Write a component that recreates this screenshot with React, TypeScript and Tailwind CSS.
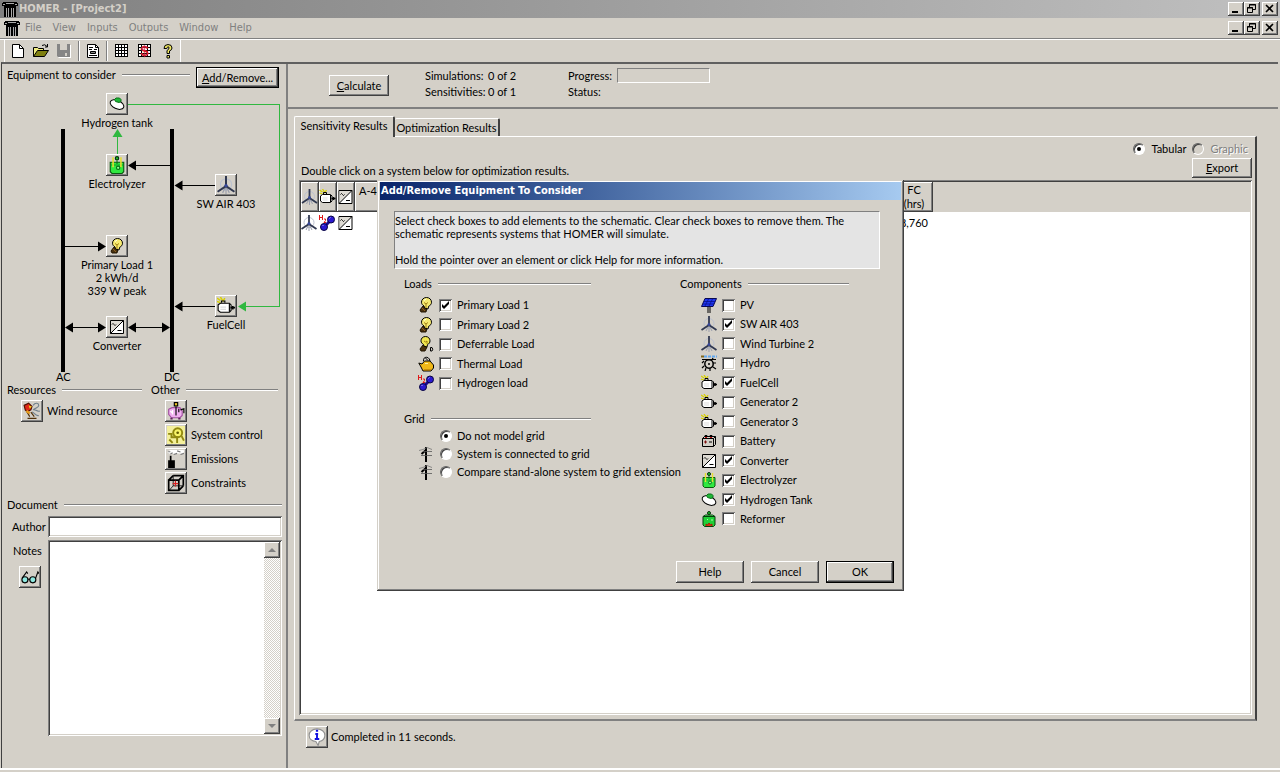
import React from 'react';

type IconProps = { className?: string };

const RAISED = 'bg-[#d4d0c8] shadow-[inset_-1px_-1px_0_#404040,inset_1px_1px_0_#fff,inset_-2px_-2px_0_#808080]';
const SUNKEN = 'shadow-[inset_1px_1px_0_#808080,inset_-1px_-1px_0_#fff,inset_2px_2px_0_#404040,inset_-2px_-2px_0_#d4d0c8]';
const DEFAULT_BTN = 'bg-[#d4d0c8] border border-black shadow-[inset_-1px_-1px_0_#404040,inset_1px_1px_0_#fff,inset_-2px_-2px_0_#808080]';

const Svg: React.FC<{ className?: string; children: React.ReactNode }> = ({ className = 'w-4 h-4', children }) => (
  <svg viewBox="0 0 16 16" className={`${className} block shrink-0`} fill="none" stroke="#000" aria-hidden="true">
    {children}
  </svg>
);

/* ---------- icons ---------- */

const ColumnIcon = ({ className }: IconProps) => (
  <Svg className={className}>
    <g stroke="none" shapeRendering="crispEdges">
      <path fill="#000" d="M1 1h14v1h1v3h-2v11H2V5H0V2h1z" />
      <path fill="#aaa" d="M4 2h8v1H4zM1 3h2v1H1zM13 3h2v1h-2zM4 7h1v9H4zM6 7h1v9H6zM9 7h1v9H9zM11 7h1v9h-1z" />
    </g>
  </Svg>
);

const BulbIcon = ({ className }: IconProps) => (
  <Svg className={className}>
    <path d="M5 9l4 2-1 4H3l-1-2z" fill="#4a3210" stroke="#201400" />
    <path d="M8.500.5c3 0 5 2.200 5 4.700 0 2-1.200 3.300-2.800 4L10 12 6.500 11 6 9C4.500 8 3.500 7 3.500 5.200c0-2.500 2-4.700 5-4.700z" fill="#f6ea70" />
    <path d="M6 5.500l2 1.500 2-1.500M8 7v4" stroke="#a08010" />
    <path d="M6 3.500L8 2" stroke="#fffff0" />
    <path d="M4 11l3 3" stroke="#906020" />
  </Svg>
);

const DeferrableIcon = () => (
  <Svg>
    <path d="M5 9l4 2-2 4H3l-1-2z" fill="#4a3210" stroke="#201400" />
    <path d="M7.500.5c2.800 0 4.500 2 4.500 4.300 0 2-1 3-2.500 3.800L9 11l-3-.8-.5-1.700C4 7.500 3 6.500 3 4.800 3 2.500 4.700.5 7.500.5z" fill="#f0e650" />
    <path d="M6 5l1.500 1L9 5v3" stroke="#a08010" />
    <path d="M12.500 11.500v3.500h1.500q1.500-1.700 0-3.500z" />
  </Svg>
);

const KettleIcon = () => (
  <Svg>
    <path d="M5.500 5c-.5-5 6-5 6.500 0M7 1.500l3 3" />
    <path d="M.8 7l3.200 1 2.500-3H12l3.500 4v3L13 15H5L3 11z" fill="#f0b818" />
    <path d="M7 7.500h3" stroke="#fff0a0" />
    <path d="M6 14h7" stroke="#a06800" />
  </Svg>
);

const HydrogenIcon = () => (
  <Svg>
    <g stroke="#e01818">
      <path d="M.5 0v5M3.500 0v5M.5 2.500h3M5 4h1.500v1.500L5 7.500h2" />
    </g>
    <path d="M6 11l5-5" stroke="#1a0a90" strokeWidth="3" />
    <circle cx="12" cy="4.500" r="3.500" fill="#2a18d0" stroke="#080440" />
    <circle cx="5" cy="12" r="3.500" fill="#2a18d0" stroke="#080440" />
    <path d="M10.500 3.500l1-1M3.500 11l1-1" stroke="#b0b0ff" />
  </Svg>
);

const TowerIcon = () => (
  <Svg>
    <path d="M8 1v15" strokeWidth="2" />
    <path d="M8 4L3.500 8" strokeWidth="2" />
    <path d="M3 9.500h11M5 5.500h9" stroke="#555" strokeWidth=".8" />
    <path d="M1 4.500l4-1 4-2 5 2" stroke="#777" strokeWidth=".8" />
  </Svg>
);

const PVIcon = () => (
  <Svg>
    <path d="M7 9v7M9 9v7" />
    <path d="M4 1.500h11.500L12 9.500H.5z" fill="#2038f0" stroke="#080850" />
    <path d="M7.500 2L4 9M11.500 2L8 9M3 4.500h11M2 7h11" stroke="#081090" strokeWidth=".8" />
  </Svg>
);

const TurbineIcon = ({ className }: IconProps) => (
  <Svg className={className}>
    <circle cx="8" cy="7.500" r="5" stroke="#bcc2d0" />
    <path d="M8 9l-3 6M8 9l3 6M8 9v7" stroke="#9a9eac" />
    <path d="M8 0v9" stroke="#303850" strokeWidth="1.800" />
    <path d="M8 9l-7.500 5M8 9l7.500 5" stroke="#303850" strokeWidth="1.800" />
    <circle cx="8" cy="8.500" r="1.500" fill="#384898" stroke="none" />
  </Svg>
);

const HydroIcon = () => (
  <Svg>
    <path d="M0 1.500h3" stroke="#806820" strokeWidth="2" />
    <path d="M3 1.500h13" stroke="#60a8f0" strokeWidth="2" strokeDasharray="3 1" />
    <circle cx="8" cy="9" r="4.200" fill="#d4d0c8" strokeWidth="1.500" />
    <circle cx="8" cy="9" r="1" fill="#000" stroke="none" />
    <path d="M1 4.500h14M3 6L1 8M3 11l-2 2M5 13l-1 3M9 13v3M12 12l3 2M12 8h3M11 5l1-2" strokeWidth="1.200" />
  </Svg>
);

const GeneratorIcon = ({ className }: IconProps) => (
  <Svg className={className}>
    <path d="M0 1l3 2M3 0l2 3M0 4l3 1M7 1L5 4" stroke="#d8d000" strokeWidth="1.300" />
    <path d="M3 5.500h8l1.500 1.500v5L11 13.500H3L1 12V7z" fill="#fff" />
    <path d="M11 6v7M4 5V3.500h3V5" />
    <path d="M3 9h5M3 11h5" stroke="#ddd" />
    <path d="M12 9.500h4M14 8v3" strokeWidth="1.600" />
  </Svg>
);

const BatteryIcon = () => (
  <Svg>
    <path d="M1.500 5.500l2-2h11v8l-2 2h-11z" fill="#d4d0c8" />
    <path d="M1.500 5.500h11v8M12.500 5.500l2-2M4 4V2.500h2V4M9 4V2.500h2V4" />
    <path d="M3 9h3M4.500 7.500v3" stroke="#801010" />
    <path d="M8 9h3" />
    <path d="M4 4.500h2M9 4.500h2" stroke="#c01010" />
  </Svg>
);

const ConverterIcon = ({ className }: IconProps) => (
  <Svg className={className}>
    <path d="M1.500 1.500h13v13h-13z" fill="#fff" />
    <path d="M2 2h12L2 14z" fill="#dedbd4" stroke="none" />
    <path d="M1.500 14.500l13-13" />
    <path d="M3 5.500q1-2 2 0t2 0M8.500 11.500h4" />
  </Svg>
);

const ElectrolyzerIcon = ({ className }: IconProps) => (
  <Svg className={className}>
    <path d="M2 5.500h12v8.500l-1.500 1.500h-9L2 14z" fill="#30e840" stroke="#0a5a10" />
    <path d="M2.500 8h11" stroke="#10a828" />
    <path d="M4.500 1v9M11.500 1v9" stroke="#e8e030" strokeWidth="1.400" />
    <circle cx="8" cy="2" r="1.500" fill="#20c030" stroke="#043008" />
    <path d="M8 4v3" stroke="#0a7018" />
    <circle cx="9" cy="10.500" r="1.500" fill="#90ff90" stroke="#0a7018" />
  </Svg>
);

const TankIcon = ({ className }: IconProps) => (
  <Svg className={className}>
    <ellipse cx="8" cy="8.500" rx="7.300" ry="4.200" transform="rotate(25 8 8.500)" fill="#fff" />
    <path d="M5.500 3.500L7 2h3.500L12 3.500v2L10 6.500 6.500 5.500z" fill="#20b838" stroke="#0a7018" />
  </Svg>
);

const ReformerIcon = () => (
  <Svg>
    <path d="M2 5.500h12v8.500l-1.500 1.500h-9L2 14z" fill="#20d038" stroke="#063c0c" />
    <path d="M2 5.500l2.500-1.500h7L14 5.500z" fill="#50f060" stroke="#063c0c" />
    <circle cx="8" cy="2" r="1.500" fill="#20c030" stroke="#043008" />
    <path d="M6 8l1 1M10 9h2" stroke="#a0ffa0" />
    <path d="M5 15v-2l1.500 1L8 12l1.500 2 1.500-1v2" fill="#e03010" stroke="#a02008" />
  </Svg>
);

const WindIcon = ({ className }: IconProps) => (
  <Svg className={className}>
    <path d="M1 3l4-2 3 3-1 3-2 1v2L2 7z" fill="#e02818" stroke="#501000" />
    <path d="M5 3l3 1-2 2z" fill="#f0d020" stroke="none" />
    <path d="M9 3c2-3 5-2 5 0s-3 2-5 4M9 7c2-1 3 2 6 1M8 9c2 0 3 4 6 3" stroke="#70808c" />
    <path d="M3 8l3 5M7 9l3 4M4 14.500h8" stroke="#503008" />
    <path d="M3 8l3 2" stroke="#e8a020" strokeWidth="2" />
  </Svg>
);

const PiggyIcon = ({ className }: IconProps) => (
  <Svg className={className}>
    <path d="M1.500 6.500l3-1.500h7l2 3v4l-2 2H4L1.500 11z" fill="#f0b0f0" stroke="#a050a0" />
    <rect x="6.500" y=".5" width="3" height="3" fill="#e8c020" />
    <path d="M8 4v8M10.500 6v3M12 7l3-1v4" />
    <path d="M3 8l2 2M5 7v4" stroke="#fff" />
    <path d="M4 14v1.500M11 14v1.500" stroke="#602060" strokeWidth="2" />
  </Svg>
);

const ControlIcon = ({ className }: IconProps) => (
  <Svg className={className}>
    <path d="M0 0h16v16H0z" fill="#f4f09c" stroke="none" />
    <circle cx="9.500" cy="6" r="4" fill="#f8f468" stroke="#908810" strokeWidth="1.700" />
    <circle cx="9.500" cy="6" r="1.200" fill="#605800" stroke="none" />
    <path d="M1 7h3v3h5v5M2 12l3 3M13 9l2 4" stroke="#908810" strokeWidth="1.700" />
  </Svg>
);

const EmissionsIcon = ({ className }: IconProps) => (
  <Svg className={className}>
    <path d="M1 16V9h1.500V5H4v4h3v7z" fill="#000" stroke="none" />
    <path d="M2 3c1-2 4-2 5-1 2-1 4-1 8 0" stroke="#fff" strokeWidth="3.500" />
    <path d="M1 1.500h2M6 4l3-1M9 .8l3 1M3 3.500l2-1M12 4l3-1" stroke="#777" />
  </Svg>
);

const CubeIcon = ({ className }: IconProps) => (
  <Svg className={className}>
    <path d="M1.500 5.500h9v9h-9zM5.500 1.500h9v9M1.500 5.500l4-4M10.500 5.500l4-4M10.500 14.500l4-4" strokeWidth="1.500" />
    <path d="M5.500 2v8.500H14M2 14.500l3.500-4" strokeWidth=".7" />
    <path d="M5 8.500h5M7.500 6v5" stroke="#d82020" />
  </Svg>
);

const GlassesIcon = ({ className }: IconProps) => (
  <Svg className={className}>
    <circle cx="3.500" cy="10.500" r="2.700" fill="#8ee8e0" />
    <circle cx="10.500" cy="10.500" r="2.700" fill="#8ee8e0" />
    <path d="M6 10h2M1 9l4-5.500 1 1.500M13 9l2-5.500 1 1.500" />
  </Svg>
);

const InfoIcon = ({ className }: IconProps) => (
  <Svg className={className}>
    <path d="M8 .8c4 0 7 2.400 7 5.700 0 3-2 5-5 5.500L9 15.500 7 12C3.500 11.700 1 9.500 1 6.500 1 3.200 4 .8 8 .8z" fill="#fff" stroke="#909090" />
    <path d="M7 2.500h2M6.500 5.300H9M8 5v5M6 9.800h4" stroke="#1010e0" strokeWidth="1.700" />
  </Svg>
);

const NewIcon = () => (
  <Svg>
    <path d="M2.500 1.500h7l4 4v9h-11z" fill="#fff" />
    <path d="M9.500 1.500v4h4" />
  </Svg>
);

const OpenIcon = () => (
  <Svg>
    <path d="M.5 13.500v-9h4l1 1h5v2" fill="#f0ec80" />
    <path d="M.5 13.500l4-6h11l-4 6z" fill="#808010" />
    <path d="M9 2.500q3-2 5 1M14.500 1v3H12" />
  </Svg>
);

const SaveIcon = () => (
  <Svg>
    <path d="M2 2h13v13H3l-1-1z" fill="#fff" stroke="none" />
    <path d="M1 1h13v13H2l-1-1z" fill="#858585" stroke="none" />
    <path d="M4 1h7v6H4zM9 10h2v3H9z" fill="#d4d0c8" stroke="none" />
  </Svg>
);

const ReportIcon = () => (
  <Svg>
    <path d="M2.500 1.500h8l3 3v10h-11z" fill="#fff" />
    <path d="M10.500 1.500v3h3M4 4.500h4M4 6.500h3M9 6.500h3M4 12.500h8" />
    <path d="M5.500 8.500h5v2h-5z" fill="#888" />
  </Svg>
);

const GridIcon = () => (
  <Svg>
    <g shapeRendering="crispEdges">
      <path d="M1.500 1.500h12v12h-12z" fill="#fff" />
      <path d="M4.500 1v13M7.500 1v13M10.500 1v13M1 4.500h13M1 7.500h13M1 10.500h13" />
    </g>
  </Svg>
);

const CostIcon = () => (
  <Svg>
    <g shapeRendering="crispEdges">
      <path d="M1.500 1.500h12v12h-12z" fill="#fff" />
      <path d="M4.500 1v13M10.500 1v13M1 4.500h13M1 7.500h13M1 10.500h13" />
    </g>
    <text x="7.500" y="13" textAnchor="middle" fill="#d01830" stroke="none" fontSize="15" fontWeight="bold" fontFamily="Liberation Sans">$</text>
  </Svg>
);

const HelpIcon = () => (
  <Svg>
    <path d="M4 5.500q0-4 4-4t4 3.500q0 2-2.500 3v2.500H7V7.500Q9 6.500 9 5T8 3.800 6.800 5.500z" fill="#f0e860" />
    <path d="M7 12.500h2.500V15H7z" fill="#f0e860" />
  </Svg>
);

/* ---------- small controls ---------- */

const IconButton: React.FC<{ label: string; children: React.ReactNode }> = ({ label, children }) => (
  <button type="button" aria-label={label} className={`w-[22px] h-[22px] shrink-0 grid place-items-center ${RAISED}`}>
    {children}
  </button>
);

const Rule = () => <span className="flex-1 h-[2px] border-t border-[#808080] border-b border-b-white" />;

const SectionHead: React.FC<{ title: string; className?: string }> = ({ title, className = '' }) => (
  <h3 className={`flex items-center gap-[6px] h-4 leading-3 ${className}`}>
    {title}
    <Rule />
  </h3>
);

const CheckRow: React.FC<{ label: string; icon: React.ReactNode; checked?: boolean }> = ({ label, icon, checked }) => (
  <label className="flex items-center h-[18px]">
    {icon}
    <span className="relative ml-[5px] mr-[5px] w-[13px] h-[13px] shrink-0">
      <input type="checkbox" defaultChecked={checked} className={`peer appearance-none block w-[13px] h-[13px] bg-white ${SUNKEN}`} />
      <svg viewBox="0 0 13 13" className="absolute inset-0 hidden peer-checked:block pointer-events-none" aria-hidden="true">
        <path d="M3 5v3l2 2 5-5V2L5 7z" fill="#000" />
      </svg>
    </span>
    {label}
  </label>
);

const Radio: React.FC<{ name: string; checked?: boolean; disabled?: boolean }> = ({ name, checked, disabled }) => (
  <span className="relative w-3 h-3 shrink-0">
    <input
      type="radio"
      name={name}
      defaultChecked={checked}
      disabled={disabled}
      className="peer appearance-none block w-3 h-3 rounded-full border border-t-[#606060] border-l-[#606060] border-b-white border-r-white bg-white shadow-[inset_1px_1px_0_#404040] disabled:bg-[#d4d0c8]"
    />
    <span className="absolute left-1 top-1 w-1 h-1 rounded-full bg-black hidden peer-checked:block pointer-events-none" />
  </span>
);

const WindowButtons = () => (
  <div className="flex items-center pr-[2px]">
    <button type="button" aria-label="Minimize" className={`w-4 h-[14px] ${RAISED}`}>
      <svg viewBox="0 0 16 14" className="block w-4 h-[14px]"><path d="M4 9h6v2H4z" /></svg>
    </button>
    <button type="button" aria-label="Restore" className={`w-4 h-[14px] ${RAISED}`}>
      <svg viewBox="0 0 16 14" className="block w-4 h-[14px]" fill="none" stroke="#000">
        <path d="M5.500 5V2.500h6v5H9M5 3h7M3.500 5.500h5v5h-5zM3 6h6" />
      </svg>
    </button>
    <button type="button" aria-label="Close" className={`ml-[2px] w-4 h-[14px] ${RAISED}`}>
      <svg viewBox="0 0 16 14" className="block w-4 h-[14px]" fill="none" stroke="#000" strokeWidth="1.600">
        <path d="M4 3l7 7M11 3l-7 7" />
      </svg>
    </button>
  </div>
);

/* ---------- schematic ---------- */

const Node: React.FC<{ className: string; lines: string[]; children: React.ReactNode }> = ({ className, lines, children }) => (
  <div className={`absolute w-[90px] flex flex-col items-center leading-[13px] whitespace-nowrap ${className}`}>
    <IconButton label={lines[0]}>{children}</IconButton>
    <div className="mt-px text-center">
      {lines.map((line) => <div key={line}>{line}</div>)}
    </div>
  </div>
);

const Schematic = () => (
  <div className="relative h-[294px]">
    <svg className="absolute left-0 top-0 w-[284px] h-[294px]" viewBox="2 88 284 294" shapeRendering="crispEdges" aria-hidden="true">
      <path d="M61 129h4v243h-4zM170 129h4v243h-4z" />
      <g fill="none" stroke="#000">
        <path d="M136 165.500h34M182 185.500h33M65 246.500h34M182 306.500h33M70 327.500h30M132 327.500h32" />
      </g>
      <g shapeRendering="auto">
        <path d="M128 165.500l8-5v10zM174.500 185.500l8-5v10zM106 246.500l-8-5v10zM174.500 306.500l8-5v10z" />
        <path d="M65 327.500l8-5v10zM106 327.500l-8-5v10zM128 327.500l8-5v10zM170 327.500l-8-5v10z" />
        <path d="M117.500 129l-5 8h10zM238 306.500l8-5v10z" fill="#30b840" />
      </g>
      <path d="M128 104.500h151v202H244M117.500 154v-18" fill="none" stroke="#30b840" />
    </svg>
    <Node className="left-[70px] top-[5px]" lines={['Hydrogen tank']}><TankIcon /></Node>
    <Node className="left-[70px] top-[66px]" lines={['Electrolyzer']}><ElectrolyzerIcon className="w-[18px] h-[18px]" /></Node>
    <Node className="left-[179px] top-[86px]" lines={['SW AIR 403']}><TurbineIcon className="w-[18px] h-[18px]" /></Node>
    <Node className="left-[70px] top-[147px]" lines={['Primary Load 1', '2 kWh/d', '339 W peak']}><BulbIcon /></Node>
    <Node className="left-[179px] top-[207px]" lines={['FuelCell']}><GeneratorIcon className="w-[18px] h-[18px]" /></Node>
    <Node className="left-[70px] top-[228px]" lines={['Converter']}><ConverterIcon /></Node>
    <span className="absolute left-[54px] top-[283px] leading-3">AC</span>
    <span className="absolute left-[162px] top-[283px] leading-3">DC</span>
  </div>
);

const others = [
  { label: 'Economics', Icon: PiggyIcon },
  { label: 'System control', Icon: ControlIcon },
  { label: 'Emissions', Icon: EmissionsIcon },
  { label: 'Constraints', Icon: CubeIcon },
];

const Sidebar = () => (
  <aside className="w-[286px] shrink-0 flex flex-col border-r-2 border-[#808080]">
    <div className="flex items-start pl-[5px] pr-[7px] pt-[3px]">
      <h2 className="flex-1 flex items-center gap-[6px] h-4 mr-[6px]">Equipment to consider<Rule /></h2>
      <button type="button" className={`w-[83px] h-[21px] ${DEFAULT_BTN}`}><u>A</u>dd/Remove...</button>
    </div>

    <Schematic />

    <div className="flex gap-[9px] pl-[5px] pr-[8px]">
      <section className="w-[135px]">
        <SectionHead title="Resources" />
        <div className="flex items-center gap-1 pl-[14px] mt-[2px]">
          <IconButton label="Wind resource"><WindIcon className="w-[18px] h-[18px]" /></IconButton>
          Wind resource
        </div>
      </section>
      <section className="flex-1">
        <SectionHead title="Other" />
        <div className="flex flex-col gap-[2px] pl-[14px] mt-[2px]">
          {others.map(({ label, Icon }) => (
            <div key={label} className="flex items-center gap-1">
              <IconButton label={label}><Icon className="w-[18px] h-[18px]" /></IconButton>
              {label}
            </div>
          ))}
        </div>
      </section>
    </div>

    <section className="flex-1 flex flex-col pl-[5px] pr-1 pb-8 mt-[3px]">
      <SectionHead title="Document" />
      <div className="flex items-center mt-[3px]">
        <label htmlFor="author" className="w-[41px] pl-[5px]">Author</label>
        <input id="author" className={`flex-1 min-w-0 h-[21px] px-1 bg-white ${SUNKEN}`} />
      </div>
      <div className="flex-1 flex mt-[3px]">
        <div className="w-[41px] pl-[6px]">
          <label htmlFor="notes" className="block h-[26px] pt-[3px]">Notes</label>
          <div className="pl-[6px]"><IconButton label="View notes"><GlassesIcon className="w-[18px] h-[18px]" /></IconButton></div>
        </div>
        <div className={`flex-1 flex p-[2px] bg-white ${SUNKEN}`}>
          <textarea id="notes" className="flex-1 min-w-0 resize-none overflow-hidden outline-none" />
          <div className="w-4 flex flex-col justify-between bg-[repeating-conic-gradient(#fff_0_25%,#d4d0c8_0_50%)] bg-[length:2px_2px]">
            <button type="button" aria-label="Scroll up" className={`w-4 h-4 grid place-items-center ${RAISED}`}>
              <svg viewBox="0 0 8 4" className="w-2 h-1" fill="#808080"><path d="M4 0l4 4H0z" /></svg>
            </button>
            <button type="button" aria-label="Scroll down" className={`w-4 h-4 grid place-items-center ${RAISED}`}>
              <svg viewBox="0 0 8 4" className="w-2 h-1" fill="#808080"><path d="M4 4l4-4H0z" /></svg>
            </button>
          </div>
        </div>
      </div>
    </section>
  </aside>
);

/* ---------- results ---------- */

const TH = 'p-0 font-normal border-r border-b border-[#404040] shadow-[inset_1px_1px_0_#fff,inset_-1px_-1px_0_#808080]';

const ResultsTable = () => (
  <div className={`flex-1 mr-[3px] mb-1 p-[2px] bg-white ${SUNKEN}`}>
    <table className="w-full table-fixed border-separate border-spacing-0 leading-[14px]">
      <thead>
        <tr className="h-[30px] bg-[#d4d0c8]">
          <th className={`w-[18px] ${TH}`}><TurbineIcon className="w-[17px] h-4" /></th>
          <th className={`w-[18px] ${TH}`}><GeneratorIcon className="w-[17px] h-4" /></th>
          <th className={`w-[18px] ${TH}`}><ConverterIcon className="w-[17px] h-4" /></th>
          <th className={`w-[541px] text-left align-top ${TH}`}><span className="block pl-1 pt-[2px]">A-4</span></th>
          <th className={`w-[37px] text-center ${TH}`}>FC<br />(hrs)</th>
          <th className="p-0" aria-label="Empty" />
        </tr>
      </thead>
      <tbody>
        <tr className="h-[22px]">
          <td className="p-0"><TurbineIcon /></td>
          <td className="p-0"><HydrogenIcon /></td>
          <td className="p-0"><ConverterIcon className="w-[17px] h-4" /></td>
          <td className="p-0" />
          <td className="p-0 pr-[5px] text-right">8,760</td>
          <td className="p-0" />
        </tr>
      </tbody>
    </table>
  </div>
);

const Results = () => (
  <main className="flex-1 min-w-0 flex flex-col">
    <div className="flex items-start h-[45px] pl-[41px] border-b-2 border-[#808080]">
      <button type="button" className={`mt-[11px] w-[60px] h-[21px] ${RAISED}`}><u>C</u>alculate</button>
      <dl className="grid grid-cols-[63px_80px] ml-9 mt-1 leading-4">
        <dt>Simulations:</dt><dd>0 of 2</dd>
        <dt>Sensitivities:</dt><dd>0 of 1</dd>
      </dl>
      <dl className="grid grid-cols-[49px_93px] mt-1 leading-4">
        <dt>Progress:</dt>
        <dd className="h-[15px] border border-[#808080] border-r-white border-b-white" />
        <dt>Status:</dt><dd />
      </dl>
    </div>

    <div className="flex-1 flex flex-col pl-[6px] pr-[21px] pt-[7px]">
      <div className="flex items-end">
        <button type="button" className="relative z-10 -mb-px w-[101px] h-[21px] pb-[2px] bg-[#d4d0c8] border-t border-l border-white border-r-2 border-r-[#404040] rounded-t-[2px]">Sensitivity Results</button>
        <button type="button" className="w-[105px] h-[18px] bg-[#d4d0c8] border-t border-white border-r-2 border-r-[#404040] rounded-t-[2px]">Optimization Results</button>
      </div>
      <div className="flex-1 flex flex-col pl-1 border-t border-l border-white border-r-2 border-r-[#404040] border-b-2 border-b-[#808080]">
        <div className="flex items-end justify-between h-[43px] pl-[2px] pr-[3px]">
          <p className="h-[17px]">Double click on a system below for optimization results.</p>
          <div className="flex flex-col items-end h-full pt-[4px]">
            <div className="flex gap-[6px] pr-1">
              <label className="flex items-center gap-[6px]"><Radio name="view" checked />Tabular</label>
              <label className="flex items-center gap-[6px] text-[#808080] [text-shadow:1px_1px_0_#fff]"><Radio name="view" disabled />Graphic</label>
            </div>
            <button type="button" className={`mt-[1px] w-[60px] h-[20px] ${RAISED}`}><u>E</u>xport</button>
          </div>
        </div>
        <ResultsTable />
      </div>
      <div className="flex items-center gap-[3px] h-[47px] pb-[15px] pl-3">
        <IconButton label="Status"><InfoIcon className="w-[18px] h-[18px]" /></IconButton>
        Completed in 11 seconds.
      </div>
    </div>
  </main>
);

/* ---------- dialog ---------- */

const loads = [
  { label: 'Primary Load 1', icon: <BulbIcon />, checked: true },
  { label: 'Primary Load 2', icon: <BulbIcon /> },
  { label: 'Deferrable Load', icon: <DeferrableIcon /> },
  { label: 'Thermal Load', icon: <KettleIcon /> },
  { label: 'Hydrogen load', icon: <HydrogenIcon /> },
];

const components = [
  { label: 'PV', icon: <PVIcon /> },
  { label: 'SW AIR 403', icon: <TurbineIcon />, checked: true },
  { label: 'Wind Turbine 2', icon: <TurbineIcon /> },
  { label: 'Hydro', icon: <HydroIcon /> },
  { label: 'FuelCell', icon: <GeneratorIcon />, checked: true },
  { label: 'Generator 2', icon: <GeneratorIcon /> },
  { label: 'Generator 3', icon: <GeneratorIcon /> },
  { label: 'Battery', icon: <BatteryIcon /> },
  { label: 'Converter', icon: <ConverterIcon />, checked: true },
  { label: 'Electrolyzer', icon: <ElectrolyzerIcon />, checked: true },
  { label: 'Hydrogen Tank', icon: <TankIcon />, checked: true },
  { label: 'Reformer', icon: <ReformerIcon /> },
];

const gridOptions = [
  { label: 'Do not model grid', tower: false },
  { label: 'System is connected to grid', tower: true },
  { label: 'Compare stand-alone system to grid extension', tower: true },
];

const EquipmentDialog = () => (
  <div
    role="dialog"
    aria-labelledby="dialog-title"
    className="absolute z-20 left-[377px] top-[180px] w-[527px] p-[3px] pt-[2px] bg-[#d4d0c8] shadow-[inset_-1px_-1px_0_#404040,inset_1px_1px_0_#d4d0c8,inset_-2px_-2px_0_#808080,inset_2px_2px_0_#fff]"
  >
    <h2 id="dialog-title" className="h-[18px] leading-[18px] pl-[1px] text-white font-bold font-['DejaVu_Sans_Condensed','DejaVu_Sans',sans-serif] bg-linear-to-r from-[#0a246a] to-[#a6caf0]">
      Add/Remove Equipment To Consider
    </h2>
    <div className="pt-[11px] pl-[14px] pr-[7px] pb-[5px]">
      <div className="mr-[14px] h-[58px] pt-[2px] leading-[13px] bg-[#e4e4e4] border border-[#808080] border-r-white border-b-white">
        <p>Select check boxes to add elements to the schematic. Clear check boxes to remove them. The<br />schematic represents systems that HOMER will simulate.</p>
        <p className="mt-[13px]">Hold the pointer over an element or click Help for more information.</p>
      </div>

      <div className="flex pl-[10px] mt-[7px]">
        <div className="w-[276px]">
          <SectionHead title="Loads" className="w-[187px]" />
          <div className="flex flex-col justify-between h-[96px] pl-[14px] mt-1">
            {loads.map((item) => <CheckRow key={item.label} {...item} />)}
          </div>
          <SectionHead title="Grid" className="w-[187px] mt-[19px]" />
          <div className="pl-[14px]">
            {gridOptions.map(({ label, tower }, index) => (
              <label key={label} className="flex items-center h-[18px] whitespace-nowrap">
                <span className="w-[22px] shrink-0">{tower && <TowerIcon />}</span>
                <span className="mr-[5px] flex shrink-0"><Radio name="grid" checked={index === 0} /></span>
                {label}
              </label>
            ))}
          </div>
        </div>
        <div>
          <SectionHead title="Components" className="w-[169px]" />
          <div className="flex flex-col justify-between h-[232px] pl-[21px] mt-1">
            {components.map((item) => <CheckRow key={item.label} {...item} />)}
          </div>
        </div>
      </div>

      <div className="flex justify-end gap-[7px] mt-[33px]">
        <button type="button" className={`w-[68px] h-[22px] ${RAISED}`}>Help</button>
        <button type="button" className={`w-[68px] h-[22px] ${RAISED}`}>Cancel</button>
        <button type="button" className={`w-[68px] h-[22px] ${DEFAULT_BTN}`}>OK</button>
      </div>
    </div>
  </div>
);

/* ---------- window chrome ---------- */

const menus = ['File', 'View', 'Inputs', 'Outputs', 'Window', 'Help'];

const Separator = () => <span className="w-[2px] h-5 border-l border-[#808080] border-r border-r-white" />;

const Header = () => (
  <header className="font-['DejaVu_Sans_Condensed','DejaVu_Sans',sans-serif]">
    <div className="flex items-center h-[18px] pl-[2px] bg-linear-to-r from-[#808080] to-[#c0c0c0] text-[#d4d0c8] font-bold">
      <ColumnIcon />
      <h1 className="flex-1 pl-[1px]">HOMER - [Project2]</h1>
      <WindowButtons />
    </div>
    <div className="flex items-center h-5 pl-1 text-[#808080]">
      <ColumnIcon />
      <nav className="flex-1 flex gap-[11px] pl-[5px]">
        {menus.map((menu) => <button key={menu} type="button">{menu}</button>)}
      </nav>
      <WindowButtons />
    </div>
    <div className="flex items-center h-6 border-t border-[#808080] shadow-[inset_0_1px_0_#fff]">
      <div className="flex items-center h-full pl-[10px] pr-1 ml-1 border-l border-white border-r border-r-white">
        <div className="flex gap-[7px] -ml-[5px] mr-[6px]">
          <button type="button" aria-label="New"><NewIcon /></button>
          <button type="button" aria-label="Open"><OpenIcon /></button>
          <button type="button" aria-label="Save"><SaveIcon /></button>
        </div>
        <Separator />
        <button type="button" aria-label="Report" className="mx-[5px]"><ReportIcon /></button>
        <Separator />
        <div className="flex gap-[7px] ml-[6px]">
          <button type="button" aria-label="Search space"><GridIcon /></button>
          <button type="button" aria-label="Costs"><CostIcon /></button>
          <button type="button" aria-label="Help"><HelpIcon /></button>
        </div>
      </div>
    </div>
  </header>
);

const App: React.FC = () => {
  return (
    <div className="relative min-h-screen flex flex-col bg-[#d4d0c8] text-black text-[11px] leading-4 font-[Lato,'Liberation_Sans',Arial,sans-serif]">
      <Header />
      <div className="flex-1 flex ml-px mr-[2px] border-t-2 border-[#606060] border-l border-l-[#404040]">
        <Sidebar />
        <Results />
      </div>
      <footer className="h-1 border-t-2 border-white" />
      <EquipmentDialog />
    </div>
  );
};

export default App;
